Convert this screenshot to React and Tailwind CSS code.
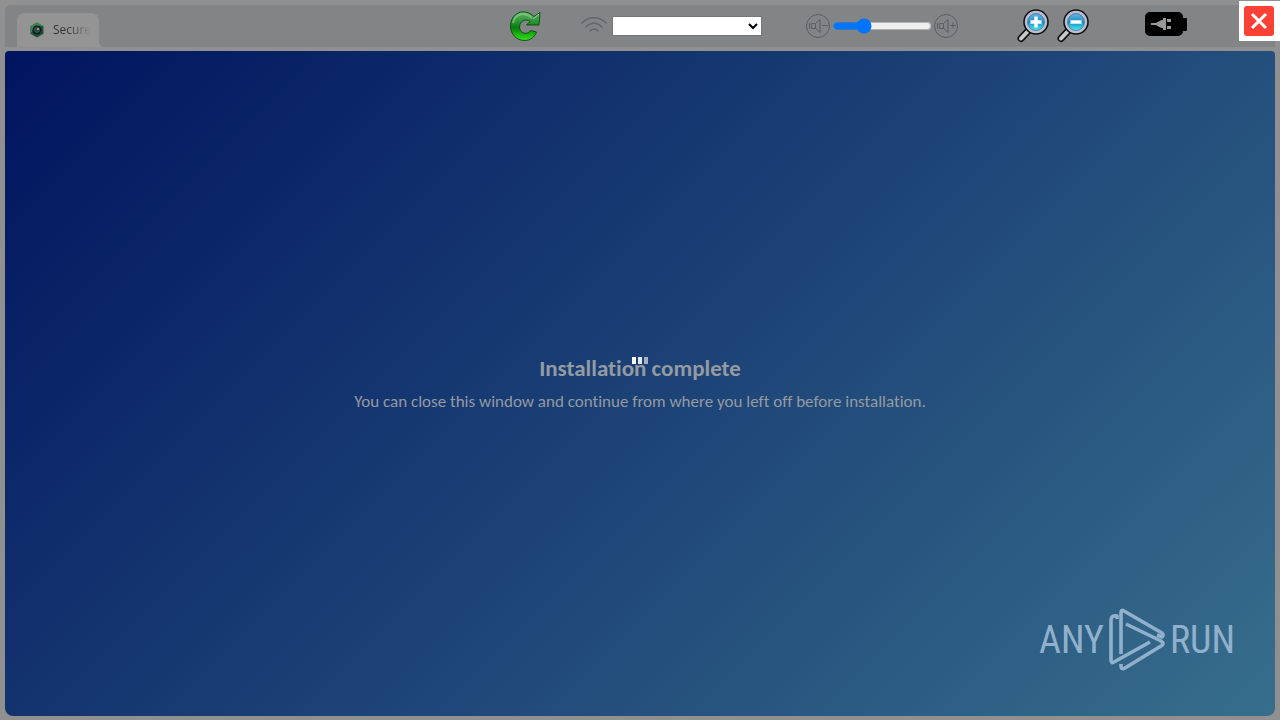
import React, { useState } from 'react';

const App = () => {
  const [volume, setVolume] = useState(28);

  return (
    <div className="relative flex flex-col min-h-screen bg-[#909090] px-[5px] pt-[5px] pb-1 font-['Open_Sans',sans-serif] overflow-hidden">
      {/* Toolbar */}
      <header className="flex h-[42px] pl-3 pr-[87px] items-center bg-[#828486] rounded-t-md">
        <div className="flex self-end items-end">
          <button className="flex items-center gap-2 h-[34px] w-[82px] pl-3 rounded-t-lg bg-[#949494]">
            <TabIcon />
            <span className="whitespace-nowrap text-xs leading-4 text-left bg-linear-to-r from-[#333333] from-40% to-[#949494] bg-clip-text text-transparent">
              Secure
            </span>
          </button>
          <svg width="6" height="6" viewBox="0 0 6 6">
            <path d="M0 0q0 6 6 6H0z" fill="#949494" />
          </svg>
        </div>

        <button className="ml-auto mr-[39px]" aria-label="Reload">
          <ReloadIcon />
        </button>

        <label className="flex items-center gap-1 mr-[43px]">
          <WifiIcon />
          <select
            aria-label="Wireless network"
            className="w-[150px] h-5 bg-white border border-[#767676] text-xs text-black"
          />
        </label>

        <div className="flex items-center mr-[57px]">
          <button aria-label="Volume down"><VolumeIcon /></button>
          <input
            type="range"
            min="0"
            max="100"
            value={volume}
            onChange={(e) => setVolume(Number(e.target.value))}
            aria-label="Volume"
            className="w-[100px] mx-px accent-[#0075ff]"
          />
          <button aria-label="Volume up"><VolumeIcon plus /></button>
        </div>

        <div className="flex gap-1 mr-[52px]">
          <button aria-label="Zoom in"><ZoomIcon plus /></button>
          <button aria-label="Zoom out"><ZoomIcon /></button>
        </div>

        <BatteryIcon />
      </header>

      {/* Close button lies over the toolbar corner */}
      <button
        aria-label="Close"
        className="absolute top-px right-0 w-[41px] h-10 flex items-center pl-[5px] bg-white"
      >
        <svg width="30" height="30" viewBox="0 0 30 30">
          <rect width="30" height="30" rx="3" fill="#fb4136" />
          <path d="M8 8l14 14M22 8L8 22" stroke="#fff" strokeWidth="3" />
        </svg>
      </button>

      {/* Page */}
      <main className="relative flex-1 flex flex-col items-center justify-center mt-1 rounded-t-sm rounded-b-lg bg-[linear-gradient(135deg,#00145f,#376e8c)] font-[Carlito,Lato,sans-serif] text-[#949aa2] [font-variant-ligatures:none]">
        <h1 className="text-[23px] leading-7 font-bold">Installation complete</h1>
        <p className="mt-2 text-[17px] leading-6">
          You can close this window and continue from where you left off before installation.
        </p>

        <div className="absolute top-[306px] inset-x-0 flex justify-center gap-[2px]">
          <span className="w-1 h-[7px] bg-white" />
          <span className="w-1 h-[7px] bg-[#e4e8ed]" />
          <span className="w-1 h-[7px] bg-[#a5b1c3]" />
        </div>

        <div className="absolute right-10 bottom-11 flex items-center gap-1 font-['Roboto_Condensed',Roboto,sans-serif] text-[38px] leading-[60px] text-[#91b0cb]">
          <span>ANY</span>
          <PlayLogo />
          <span>RUN</span>
        </div>
      </main>
    </div>
  );
};

const TabIcon = () => (
  <svg width="16" height="16" viewBox="0 0 16 16">
    <path d="M8 .5l6.5 3.7v7.6L8 15.5l-6.5-3.7V4.2z" fill="#1d5134" />
    <path d="M8 .5L1.5 4.2v7.6L4 8l4-4 6.5.2z" fill="#3a8350" />
    <circle cx="8" cy="8" r="4.500" fill="#101c22" />
    <circle cx="8" cy="8" r="2.500" fill="#27473c" stroke="#64816f" strokeWidth="0.500" />
    <circle cx="9" cy="7" r="1" fill="#a2b4aa" />
  </svg>
);

const ReloadIcon = () => (
  <svg width="32" height="32" viewBox="0 0 32 32">
    <defs>
      <linearGradient id="reload" x1="0" y1="0" x2="0" y2="1">
        <stop offset="0" stopColor="#62b266" />
        <stop offset="0.35" stopColor="#2b9233" />
        <stop offset="0.55" stopColor="#087c0c" />
        <stop offset="1" stopColor="#35e31d" />
      </linearGradient>
    </defs>
    <path
      d="M25 6.500L31 2.500 30 15H17.500L21 11.500C17 8 10.500 11 10.500 17 10.500 23.500 18.500 25.500 21.500 20.500L27.500 22C25.500 27.500 21 30.500 15.500 30.500 7.500 30.500 1.500 24 1.500 16.500 1.500 3 15-3 25 6.500z"
      fill="url(#reload)"
      stroke="#0c5413"
      strokeWidth="1"
      strokeLinejoin="round"
    />
    <path d="M4 13C6 4 15 1 23 8" fill="none" stroke="#a1d5a3" strokeWidth="2" opacity="0.500" />
    <path d="M24 9l6-5" fill="none" stroke="#c8e7c9" strokeWidth="1" opacity="0.700" />
  </svg>
);

const WifiIcon = () => (
  <svg width="28" height="20" viewBox="0 0 28 20" fill="none" stroke="#62676b" strokeWidth="1.500" strokeLinecap="round">
    <path d="M2 7C9 0 19 0 26 7M6 11c4.500-5 11.500-5 16 0M10 15c2.500-2.600 5.500-2.600 8 0" />
  </svg>
);

const VolumeIcon = ({ plus }) => (
  <svg width="26" height="26" viewBox="0 0 26 26" fill="none" stroke="#5b5d60" strokeWidth="1">
    <circle cx="13" cy="13" r="11.500" />
    <path d="M4.500 10v6M6.500 10.500h4v5h-4zM10.500 10.500l4.500-4v13l-4.500-4M17 12.500h6" />
    {plus && <path d="M20 9.500v6" />}
  </svg>
);

const ZoomIcon = ({ plus }) => (
  <svg width="36" height="36" viewBox="0 0 36 36">
    <defs>
      <linearGradient id="lens" x1="0" y1="0" x2="0" y2="1">
        <stop offset="0" stopColor="#65b5e5" />
        <stop offset="0.5" stopColor="#168fc7" />
        <stop offset="1" stopColor="#45eff2" />
      </linearGradient>
    </defs>
    <path d="M13 22L5 30.500" stroke="#111" strokeWidth="7" strokeLinecap="round" />
    <path d="M13 22L5 30.500" stroke="#c9c9c9" strokeWidth="4" strokeLinecap="round" />
    <circle cx="20" cy="14" r="12" fill="#b9c2d3" stroke="#111" strokeWidth="1.600" />
    <circle cx="20" cy="14" r="8.500" fill="url(#lens)" stroke="#667c9d" strokeWidth="1" />
    <path d={plus ? 'M14.500 14h11M20 8.500v11' : 'M14.500 14h11'} stroke="#fff" strokeWidth="3.500" />
  </svg>
);

const BatteryIcon = () => (
  <svg width="44" height="26" viewBox="0 0 44 26" className="-mt-1" role="img" aria-label="Battery charging">
    <rect x="1" y="1" width="38" height="24" rx="5" fill="#000" />
    <rect x="36" y="7" width="7" height="13" rx="1" fill="#000" />
    <path d="M7 12h5c2-1 4-3 7-3V7h3v12h-3v-2c-3 0-5-2-7-3H7z" fill="#999" />
    <path d="M23 8h4v3h-4zM23 15h4v3h-4z" fill="#999" />
  </svg>
);

const PlayLogo = () => (
  <svg width="58" height="64" viewBox="0 0 58 64" fill="none" stroke="#91b0cb" strokeWidth="3.600" strokeLinejoin="round">
    <path d="M9 11V8Q3 7 3 12v40q0 4 3 2l36-20" />
    <path d="M13 46V5q0-4 3-2l38 22q2 2 0 4l-5-2" />
    <path d="M18 16l35 17q4 3 0 5L17 60q-4 2-4-2v-2" />
  </svg>
);

export default App;
